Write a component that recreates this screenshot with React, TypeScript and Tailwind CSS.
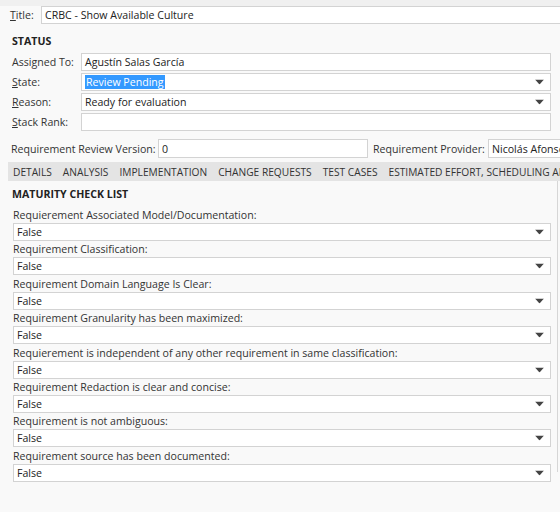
import React from "react";

const Arrow = () => (
  <svg width="9" height="5" viewBox="0 0 9 5" className="absolute right-[6px] top-1/2 -translate-y-1/2">
    <path d="M0 0 H9 L4.5 5 Z" fill="#444" />
  </svg>
);

const Box = ({ children, drop, className = "" }: { children?: React.ReactNode; drop?: boolean; className?: string }) => (
  <div className={"relative h-[18px] border border-[#d3d3d3] bg-white flex items-center pl-[3px] shrink-0 " + className}>
    {children}
    {drop && <Arrow />}
  </div>
);

const checks = [
  "Requierement Associated Model/Documentation:",
  "Requirement Classification:",
  "Requirement Domain Language Is Clear:",
  "Requirement Granularity has been maximized:",
  "Requierement is independent of any other requirement in same classification:",
  "Requirement Redaction is clear and concise:",
  "Requirement is not ambiguous:",
  "Requirement source has been documented:",
];

export default function App() {
  return (
    <div
      className="w-[560px] h-[512px] bg-[#f9f9f9] overflow-hidden text-[10.6px] leading-[14px] text-[#222] relative"
      style={{ fontFamily: '"Open Sans", "Noto Sans", sans-serif' }}
    >
      <div className="h-[6px] bg-[#f0f0f0]" />
      <div className="flex items-center pl-[10px]">
        <span className="w-[31px] text-[#333]"><u>T</u>itle:</span>
        <Box className="flex-1 border-r-0">CRBC - Show Available Culture</Box>
      </div>

      <div className="pl-[12px] pt-[10px] font-bold">STATUS</div>

      <div className="flex flex-col gap-[2px] mt-[5px] pl-[12px] pr-[9px]">
        <div className="flex items-center">
          <span className="w-[69px] text-[#333]">Assigned To:</span>
          <Box className="flex-1">Agustín Salas García</Box>
        </div>
        <div className="flex items-center">
          <span className="w-[69px] text-[#333]"><u>S</u>tate:</span>
          <Box className="flex-1" drop>
            <span className="bg-[#3399ff] text-white px-[1px]">Review Pending</span>
          </Box>
        </div>
        <div className="flex items-center">
          <span className="w-[69px] text-[#333]"><u>R</u>eason:</span>
          <Box className="flex-1" drop>Ready for evaluation</Box>
        </div>
        <div className="flex items-center">
          <span className="w-[69px] text-[#333]"><u>S</u>tack Rank:</span>
          <Box className="flex-1" />
        </div>
      </div>

      <div className="flex items-center mt-[8px] pl-[11px] whitespace-nowrap">
        <span className="w-[147px] shrink-0 text-[#333]">Requirement Review Version:</span>
        <Box className="w-[210px] h-[19px]">0</Box>
        <span className="ml-[5px] w-[115px] shrink-0 text-[#333]">Requirement Provider:</span>
        <Box className="w-[100px] h-[19px] border-r-0">Nicolás Afonso</Box>
      </div>

      <div className="ml-[8px] mt-[4px] h-[19px] bg-[#e4e4e4] flex items-center whitespace-nowrap text-[#333] text-[10.2px]">
        <span className="ml-[5px]">DETAILS</span>
        <span className="ml-[11px]">ANALYSIS</span>
        <span className="ml-[11px]">IMPLEMENTATION</span>
        <span className="ml-[11px]">CHANGE REQUESTS</span>
        <span className="ml-[11px]">TEST CASES</span>
        <span className="ml-[11px]">ESTIMATED EFFORT, SCHEDULING AND COSTS</span>
      </div>

      <div className="pl-[12px] pt-[6px] font-bold">MATURITY CHECK LIST</div>

      <div className="flex flex-col pl-[13px] pr-[9px] mt-[7px] gap-[1.4px]">
        {checks.map((c) => (
          <div key={c} className="flex flex-col">
            <span className="text-[#333] leading-[15px]">{c}</span>
            <Box drop>False</Box>
          </div>
        ))}
      </div>

      <div className="absolute left-[557px] top-[181px] h-[291px] w-px bg-[#d6d6d6]" />
    </div>
  );
}
